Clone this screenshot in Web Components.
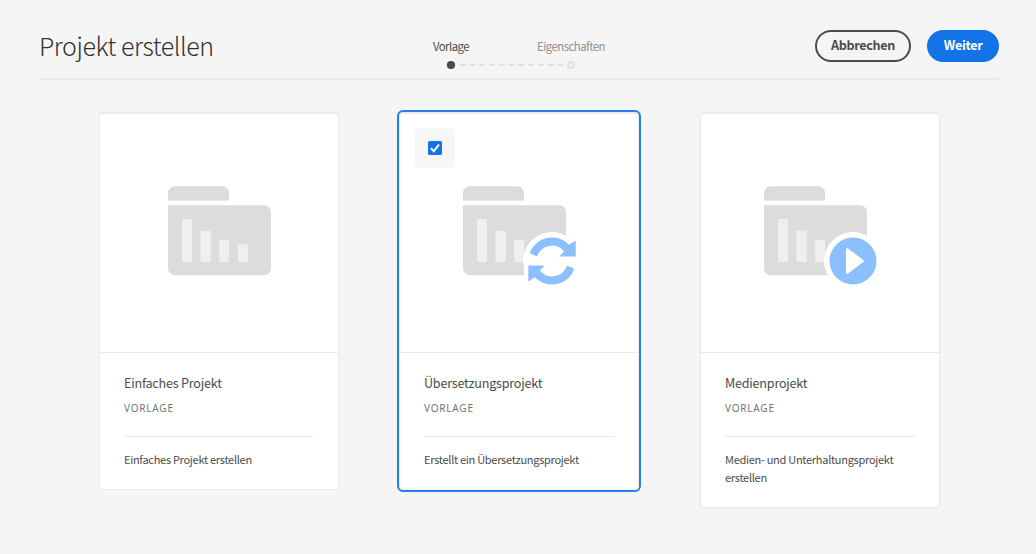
<!DOCTYPE html>
<html lang="de">
<head>
<meta charset="utf-8">
<title>Projekt erstellen</title>
<style>
body{margin:0;background:#f5f5f5;font-family:"Noto Sans CJK SC","Noto Sans",sans-serif;color:#4b4b4b}
</style>
</head>
<body>
<project-wizard></project-wizard>
<script>
const define = (name, html) => customElements.define(name, class extends HTMLElement {
  constructor() {
    super();
    const t = document.createElement('template');
    t.innerHTML = html;
    this.attachShadow({ mode: 'open' }).append(t.content.cloneNode(true));
  }
});

define('pill-button', `<style>
:host{display:block}
button{display:block;box-sizing:border-box;width:100%;height:32px;padding:0 0 2px;border:2px solid #4b4b4b;border-radius:16px;background:transparent;color:#4b4b4b;font:700 12.600px/26px "Noto Sans CJK SC","Noto Sans",sans-serif;letter-spacing:-.32px}
:host([primary]) button{background:#1473e6;border-color:#1473e6;color:#fff}
</style><button><slot></slot></button>`);

define('step-list', `<style>
:host{display:block;width:240px}
.labels{display:grid;grid-template-columns:120px 120px;text-align:center;font-size:11.300px;letter-spacing:-.48px;line-height:18px;color:#8e8e8e}
.labels .on{color:#4b4b4b}
.track{display:block;margin-top:5px}
</style>
<div class="labels"><span class="on"><slot name="first"></slot></span><span><slot name="second"></slot></span></div>
<svg class="track" width="240" height="10" viewBox="0 0 240 10"><circle cx="60" cy="5" r="4.1" fill="#4b4b4b"/><path d="M68.500 5H172" stroke="#e1e1e1" stroke-width="2" stroke-dasharray="6 3.800"/><circle cx="180" cy="5" r="3" fill="none" stroke="#e1e1e1" stroke-width="2"/></svg>`);

define('wizard-header', `<style>
:host{display:flex;box-sizing:border-box;height:80px;margin:0 37px 0 39px;border-bottom:2px solid #eaeaea}
h1{margin:25px 0 0;width:352px;font-size:25px;line-height:40px;font-weight:300;color:#323232;letter-spacing:-.46px}
step-list{margin-top:37px}
.actions{display:flex;gap:16px;margin:30px 0 0 auto}
.cancel{width:96px}.next{width:72px}
</style>
<h1>Projekt erstellen</h1>
<step-list><span slot="first">Vorlage</span><span slot="second">Eigenschaften</span></step-list>
<div class="actions"><pill-button class="cancel">Abbrechen</pill-button><pill-button class="next" primary>Weiter</pill-button></div>`);

define('folder-art', `<style>:host{display:block}svg{display:block}</style>
<svg width="104" height="90" viewBox="0 0 104 90"><path fill="#dcdcdc" d="M0 14.500V7.300A7 7 0 0 1 7 .3H54A7 7 0 0 1 61 7.300V14.500ZM0 19.200H96A7 7 0 0 1 103 26.200V82.300A7 7 0 0 1 96 89.300H7A7 7 0 0 1 0 82.300Z"/><g fill="#efefef"><rect x="14" y="33" width="10" height="43" rx="1.200"/><rect x="32.500" y="44.800" width="10.200" height="31.200" rx="1.200"/><rect x="51.200" y="53.800" width="9.800" height="22.200" rx="1.200"/><rect x="70" y="58.300" width="10" height="17.700" rx="1.200"/></g></svg>`);

define('sync-badge', `<style>:host{display:block}svg{display:block}</style>
<svg width="60" height="60" viewBox="-30 -30 60 60"><path fill="#fff" d="M-29 0A29 29 0 0 1 29 0A29 29 0 0 1 0 29H-28V5Q-29 3-29 0Z"/><g fill="#8bc0fd"><path d="M-22.200 -7.800A23.500 23.500 0 0 1 17 -16.200L23.700 -20.600V-4.500H7.300L12 -9.600A15.600 15.600 0 0 0-15 -4.500Z"/><path transform="rotate(180)" d="M-22.200 -7.800A23.500 23.500 0 0 1 17 -16.200L23.700 -20.600V-4.500H7.300L12 -9.600A15.600 15.600 0 0 0-15 -4.500Z"/></g></svg>`);

define('play-badge', `<style>:host{display:block}svg{display:block}</style>
<svg width="60" height="60" viewBox="-30 -30 60 60"><circle r="29" fill="#fff"/><circle r="23.500" fill="#8bc0fd"/><path fill="#fff" d="M-7 -11.300C-7 -12.800-6 -13.200-5 -12.400L10.300 -1Q11.500 0 10.300 1L-5 12.400C-6 13.200-7 12.800-7 11.300Z"/></svg>`);

define('check-tile', `<style>
:host{display:flex;align-items:center;justify-content:center;width:40px;height:40px;border-radius:4px;background:#f6f6f6}
svg{display:block}
</style><svg width="14" height="14" viewBox="0 0 14 14"><rect width="14" height="14" rx="1.500" fill="#1473e6"/><path d="M3 7.300L5.800 10.200L11 3.700" fill="none" stroke="#fff" stroke-width="2"/></svg>`);

define('template-card', `<style>
:host{display:block;position:relative;box-sizing:border-box;width:240px;border:1px solid #eaeaea;border-top-width:2px;border-radius:4px;background:#fff}
:host([selected]){outline:2px solid #2680eb}
.art{position:relative;height:238px;border-bottom:1px solid #eaeaea}
folder-art,::slotted([slot=badge]),check-tile{position:absolute}
folder-art{left:var(--fx,68px);top:72px}
::slotted([slot=badge]){left:var(--bx);top:117.300px}
check-tile{display:none;left:15px;top:14px}
:host([selected]) check-tile{display:flex}
.body{padding:20px 24px 21px}
.title{font-size:12.600px;letter-spacing:-.22px;line-height:20px;color:#4b4b4b}
.kind{margin-top:6px;font-family:"Noto Sans",sans-serif;font-size:10px;line-height:18px;letter-spacing:.8px;color:#747474}
.desc{margin-top:19px;border-top:1px solid #eaeaea;padding-top:13px;font-size:11px;letter-spacing:-.28px;line-height:18px;color:#4b4b4b}
</style>
<div class="art"><folder-art></folder-art><slot name="badge"></slot><check-tile></check-tile></div>
<div class="body"><div class="title"><slot name="title"></slot></div><div class="kind">VORLAGE</div><div class="desc"><slot></slot></div></div>`);

define('project-wizard', `<style>
:host{display:block;height:554px}
main{display:flex;align-items:flex-start;gap:60px;padding:32px 0 0 99px}
.sync{--fx:63px;--bx:122px}
.play{--fx:63px;--bx:122px;margin-left:1px}
</style>
<wizard-header></wizard-header>
<main>
<template-card><span slot="title">Einfaches Projekt</span>Einfaches Projekt erstellen</template-card>
<template-card class="sync" selected><span slot="title">Übersetzungsprojekt</span><sync-badge slot="badge"></sync-badge>Erstellt ein Übersetzungsprojekt</template-card>
<template-card class="play"><span slot="title">Medienprojekt</span><play-badge slot="badge"></play-badge>Medien- und Unterhaltungsprojekt erstellen</template-card>
</main>`);
</script>
</body>
</html>
